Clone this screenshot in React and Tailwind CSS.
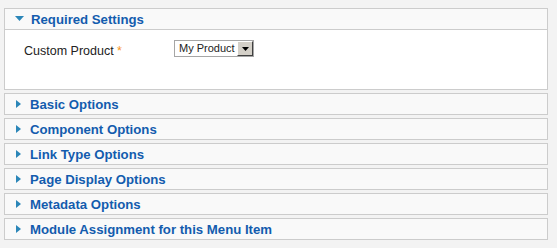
import React from 'react';

const panels = [
  'Basic Options',
  'Component Options',
  'Link Type Options',
  'Page Display Options',
  'Metadata Options',
  'Module Assignment for this Menu Item',
];

function Arrow({ open }) {
  return open ? (
    <svg width="9" height="6" viewBox="0 0 9 6" className="shrink-0">
      <path d="M0 0 H9 L4.5 5 Z" fill="#2b86b8" />
    </svg>
  ) : (
    <svg width="5" height="8" viewBox="0 0 5 8" className="shrink-0">
      <path d="M0 0 L5 4 L0 8 Z" fill="#2b86b8" />
    </svg>
  );
}

function Header({ title, open }) {
  return (
    <div className="h-[20px] flex items-center bg-[#f9f9f9]">
      <div className={`flex items-center justify-center ${open ? 'w-[26px] pl-[2px]' : 'w-[25px] pl-[1px]'}`}>
        <Arrow open={open} />
      </div>
      <span className="mt-[2px] text-[13.2px] font-bold text-[#135cae] leading-none">{title}</span>
    </div>
  );
}

export default function App() {
  return (
    <div className="w-[557px] h-[248px] bg-[#f3f3f3] pt-[8px] pl-[4px]" style={{ fontFamily: '"Liberation Sans", Arial, sans-serif' }}>
      <div className="w-[544px] flex flex-col gap-[3px]">
        {/* Required Settings, expanded */}
        <div className="border border-[#cccccc] bg-white">
          <div className="border-b border-[#cccccc]">
            <Header title="Required Settings" open />
          </div>
          <div className="h-[59px] pt-[10px] pl-[19px] flex items-start">
            <label className="w-[150px] text-[12.5px] text-[#222] pt-[2px]">
              Custom Product <span className="text-[#f7941d]">*</span>
            </label>
            <div className="h-[17px] w-[80px] border border-[#a6a6a6] bg-white flex items-center">
              <span className="flex-1 pl-[4px] text-[11px] text-[#222] leading-none">My Product</span>
              <div className="w-[16px] h-[15px] bg-[#d4d0c8] border border-t-white border-l-white border-b-[#404040] border-r-[#404040] flex items-center justify-center">
                <svg width="7" height="4" viewBox="0 0 7 4"><path d="M0 0 H7 L3.5 4 Z" fill="#000" /></svg>
              </div>
            </div>
          </div>
        </div>
        {panels.map(p => (
          <div key={p} className="border border-[#cccccc]">
            <Header title={p} />
          </div>
        ))}
      </div>
    </div>
  );
}
